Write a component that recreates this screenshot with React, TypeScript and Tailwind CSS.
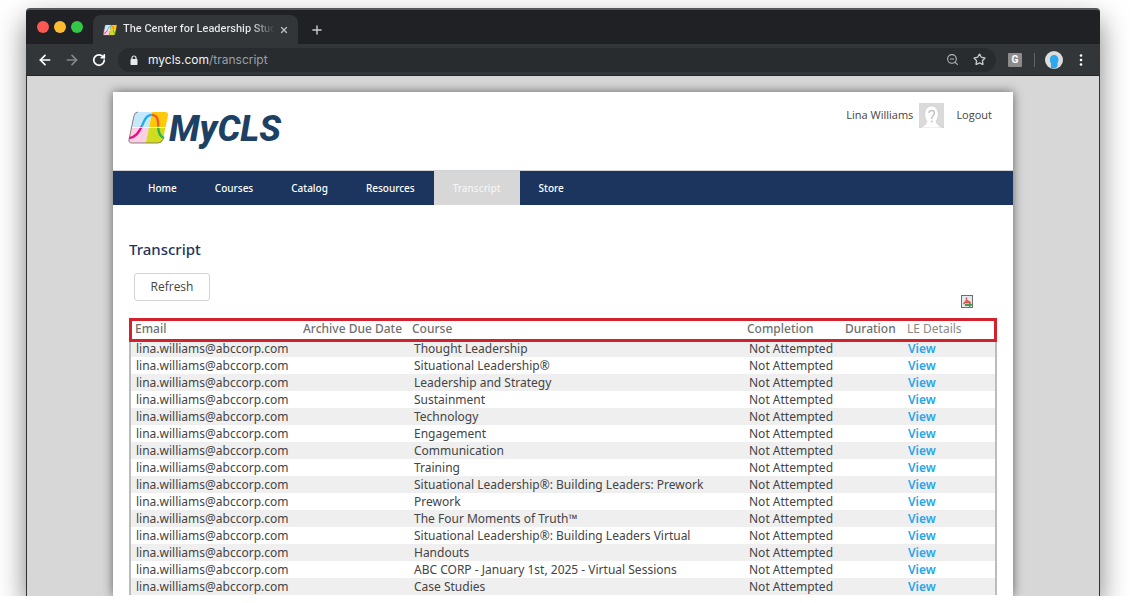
import { ArrowLeft, ArrowRight, Plus, RotateCw, Star, X, ZoomOut } from "lucide-react";

type Row = {
  email: string;
  course: string;
  completion: string;
};

const navItems = ["Home", "Courses", "Catalog", "Resources", "Transcript", "Store"];

const courses = [
  "Thought Leadership",
  "Situational Leadership®",
  "Leadership and Strategy",
  "Sustainment",
  "Technology",
  "Engagement",
  "Communication",
  "Training",
  "Situational Leadership®: Building Leaders: Prework",
  "Prework",
  "The Four Moments of Truth™",
  "Situational Leadership®: Building Leaders Virtual",
  "Handouts",
  "ABC CORP - January 1st, 2025 - Virtual Sessions",
  "Case Studies",
];

const rows: Row[] = courses.map((course) => ({
  email: "lina.williams@abccorp.com",
  course,
  completion: "Not Attempted",
}));

function CurveMark({ className }: { className?: string }) {
  return (
    <svg viewBox="0 0 42 34" className={className} aria-hidden="true">
      <clipPath id="mark">
        <path d="M10 1H38Q42 1 41 5L36 29Q35 33 31 33H4Q0 33 1 29L6 5Q7 1 10 1Z" />
      </clipPath>
      <g clipPath="url(#mark)">
        <path d="M0 0H25L21.500 17H0Z" fill="#c5e8fb" />
        <path d="M25 0H42V17H21.500Z" fill="#ffc80a" />
        <path d="M0 17H21.500L18 34H0Z" fill="#f8cfe3" />
        <path d="M21.500 17H42V34H18Z" fill="#d2dc1e" />
      </g>
      <path d="M1 28C8 27 11 22 14 16" fill="none" stroke="#ec0b83" strokeWidth="2.400" />
      <path d="M14 16C17 9 19 4 24 4" fill="none" stroke="#22aee5" strokeWidth="2.400" />
      <path d="M24 4C30 4 31 8 31 16" fill="none" stroke="#f05a28" strokeWidth="2.400" />
      <path d="M31 16C31 22 32 26 37 28" fill="none" stroke="#2bb34b" strokeWidth="2.400" />
      <path d="M1 17H39" stroke="#fff" strokeWidth="0.800" />
      <path
        d="M10 1Q7 1 6 5L1 29Q0 33 4 33H31Q34 33 36 29"
        fill="none"
        stroke="#6d6063"
        strokeWidth="0.800"
      />
    </svg>
  );
}

function BrowserChrome() {
  return (
    <header className="font-['Roboto',sans-serif] text-white">
      <div className="flex h-9 items-end rounded-t-[4px] border-t-2 border-[#55575a] bg-[#202125] pl-[11px]">
        <div className="flex h-full items-center gap-[5px] pb-px">
          <span className="size-3 rounded-full bg-[#fc5753]" />
          <span className="size-3 rounded-full bg-[#fdbc2f]" />
          <span className="size-3 rounded-full bg-[#33c748]" />
        </div>
        <div className="ml-2.5 flex h-[29px] w-[205px] items-center rounded-t-lg bg-[#323639] pl-2.5">
          <CurveMark className="h-3 w-[14px] shrink-0" />
          <span className="ml-1.5 w-[152px] bg-linear-to-r from-[#e8eaed] from-85% to-[#323639] bg-clip-text text-[11px] font-medium whitespace-nowrap text-transparent">
            The Center for Leadership Stud
          </span>
          <button aria-label="Close tab" className="ml-1">
            <X className="size-2.5 text-[#bdc1c6]" strokeWidth={3} />
          </button>
        </div>
        <button aria-label="New tab" className="mb-[7px] ml-3">
          <Plus className="size-[14px] text-[#c8cacd]" strokeWidth={2.5} />
        </button>
      </div>

      <div className="flex h-8 items-center border-b border-[#2c2224] bg-[#323639] pl-[11px]">
        <button aria-label="Back">
          <ArrowLeft className="size-4" strokeWidth={2.5} />
        </button>
        <button aria-label="Forward" className="ml-[11px]">
          <ArrowRight className="size-4 text-[#85888b]" strokeWidth={2.5} />
        </button>
        <button aria-label="Reload" className="ml-3">
          <RotateCw className="size-[14px]" strokeWidth={3} />
        </button>
        <div className="ml-3 flex h-6 grow items-center rounded-full bg-[#282c2f] pr-2.5 pl-3">
          <svg viewBox="0 0 8 10" className="h-2.5 w-2" aria-hidden="true">
            <path d="M2 5V3a2 2 0 0 1 4 0v2" fill="none" stroke="#e8eaed" strokeWidth="1.200" />
            <rect x="0.500" y="4" width="7" height="6" rx="0.800" fill="#e8eaed" />
          </svg>
          <span className="ml-2.5 grow font-['Inter',sans-serif] text-[12px] text-[#9aa0a6]">
            <span className="text-[#f1f3f4]">mycls.com</span>/transcript
          </span>
          <ZoomOut className="size-[13px] text-[#b4b8bc]" />
          <button aria-label="Bookmark" className="ml-[14px]">
            <Star className="size-[13px] text-[#c5c8cb]" strokeWidth={2.5} />
          </button>
        </div>
        <span className="ml-3 flex size-[14px] items-center justify-center rounded-[1px] bg-[#8e8c8b] text-[10px] font-bold">
          G
        </span>
        <span className="ml-3 h-[14px] w-px bg-[#606367]" />
        <svg viewBox="0 0 18 18" className="ml-2.5 size-[18px]" aria-hidden="true">
          <circle cx="9" cy="9" r="9" fill="#dedcda" />
          <path
            d="M6 17V12.500C4 10 4.500 4 9 4C13.500 4 14.500 9 12.500 12V15.500Q9.500 18.500 6 17Z"
            fill="#2ba9ee"
          />
        </svg>
        <button aria-label="Menu" className="mr-[17px] ml-4">
          <svg viewBox="0 0 4 12" className="h-3 w-1">
            <circle cx="2" cy="1.500" r="1.300" fill="#fff" />
            <circle cx="2" cy="6" r="1.300" fill="#fff" />
            <circle cx="2" cy="10.500" r="1.300" fill="#fff" />
          </svg>
        </button>
      </div>
    </header>
  );
}

function SiteHeader() {
  return (
    <div className="flex h-[79px] items-start justify-between border-b border-[#cfd3d8] pr-[21px] pl-[15px]">
      <div className="mt-[19px] flex">
        <CurveMark className="h-[33px] w-[41px]" />
        <span className="font-['Roboto',sans-serif] text-[36px] leading-9 font-extrabold text-[#1c4164] italic">
          MyCLS
        </span>
      </div>
      <div className="mt-[9px] flex items-center text-[11px] leading-7 text-[#444]">
        <span>Lina Williams</span>
        <svg viewBox="0 0 25 25" className="ml-1.5 size-[25px]" aria-hidden="true">
          <rect width="25" height="25" fill="#dadada" />
          <path
            d="M0 25Q7 23 8 18C4 14 5 3 12.500 3S21 14 17 18Q18 23 25 25Z"
            fill="#fff"
            stroke="#c6c6c6"
            strokeWidth="0.600"
          />
          <path
            d="M10 10Q10 7.500 12.700 7.500T15.300 10Q15.300 12 13.700 13Q12.700 14 12.700 16"
            fill="none"
            stroke="#c6c6c6"
            strokeWidth="1.600"
          />
          <circle cx="12.700" cy="18.500" r="1" fill="#c6c6c6" />
        </svg>
        <a href="#logout" className="ml-3">
          Logout
        </a>
      </div>
    </div>
  );
}

export default function App() {
  return (
    <div className="overflow-hidden bg-white pt-2 pr-[30px] pl-[26px] font-['Open_Sans',sans-serif]">
      <div className="rounded-t-[4px] shadow-[0_12px_28px_rgba(0,0,0,0.5)]">
        <BrowserChrome />
        <div className="overflow-hidden border-r border-l border-[#2f3032] bg-[#d7d7d7] pt-4">
          <div className="mx-auto max-w-[900px] bg-white shadow-[0_0_10px_rgba(0,0,0,0.55)]">
            <SiteHeader />

            <nav className="flex h-[34px] bg-[#1c355e] pl-4 font-['Noto_Sans',sans-serif] text-[10px] font-medium text-white">
              {navItems.map((item) => (
                <a
                  key={item}
                  href={`#${item.toLowerCase()}`}
                  className={`flex items-center px-[19px] ${
                    item === "Transcript" ? "bg-[#d7d7d7] text-[#f4f4f4]" : ""
                  }`}
                >
                  {item}
                </a>
              ))}
            </nav>

            <main className="px-4 pt-8 pb-px font-['Noto_Sans',sans-serif]">
              <h1 className="text-[15px] leading-6 font-medium text-[#1c355e]">Transcript</h1>

              <div className="my-3 flex h-[35px] items-end justify-between pr-6 pl-[5px]">
                <button className="h-7 w-[76px] self-start rounded-[3px] border border-[#d5d5d5] font-['Open_Sans',sans-serif] text-[12px] text-[#444]">
                  Refresh
                </button>
                <button aria-label="Export to PDF">
                  <svg viewBox="0 0 12 13" className="block h-[13px] w-3">
                    <rect x="0.500" y="0.500" width="11" height="12" fill="#dfe9ee" stroke="#6c6f70" />
                    <path
                      d="M5.500 2.500V5.500L2.500 9M5.500 5.500L9.500 7.500L3 7.500"
                      fill="none"
                      stroke="#e8534f"
                      strokeWidth="1.400"
                    />
                    <path d="M4 9H8V7L11.500 9.800L8 12.500V11H4Z" fill="#46984a" />
                  </svg>
                </button>
              </div>

              <div className="border-x-2 border-[#bcbcbc]">
                <table className="w-full table-fixed text-left text-[12px] leading-[17px] text-[#444]">
                  <colgroup>
                    <col className="w-[171px]" />
                    <col className="w-[109px]" />
                    <col />
                    <col className="w-[98px]" />
                    <col className="w-[62px]" />
                    <col className="w-[88px]" />
                  </colgroup>
                  <thead>
                    {/* red frame sits around the column titles */}
                    <tr className="h-5 bg-white align-top text-[#707070] outline-3 -outline-offset-1 outline-[#d3222e]">
                      <th className="p-0 pl-1 font-medium">Email</th>
                      <th className="p-0 pl-px font-medium whitespace-nowrap">Archive Due Date</th>
                      <th className="p-0 pl-px font-medium">Course</th>
                      <th className="p-0 font-medium">Completion</th>
                      <th className="p-0 font-medium">Duration</th>
                      <th className="p-0 font-normal text-[#888]">LE Details</th>
                    </tr>
                  </thead>
                  <tbody>
                    {rows.map((row) => (
                      <tr key={row.course} className="h-[17px] odd:bg-[#efefef]">
                        <td className="p-0 pl-[5px]">{row.email}</td>
                        <td className="p-0" />
                        <td className="p-0 pl-[3px]">{row.course}</td>
                        <td className="p-0 pl-0.5">{row.completion}</td>
                        <td className="p-0" />
                        <td className="p-0 pl-px">
                          <a href="#view" className="font-semibold text-[#2aa5e8]">
                            View
                          </a>
                        </td>
                      </tr>
                    ))}
                  </tbody>
                </table>
              </div>
            </main>
          </div>
        </div>
      </div>
    </div>
  );
}
